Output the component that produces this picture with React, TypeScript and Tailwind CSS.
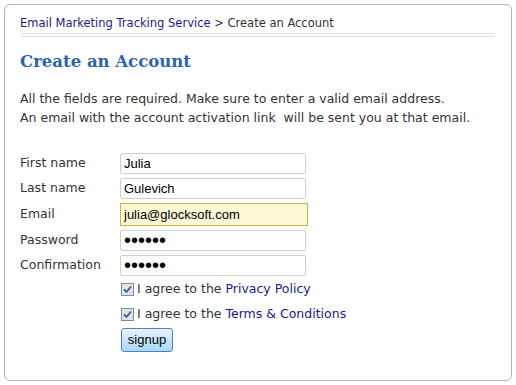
import React from "react";

const arial = { fontFamily: '"Liberation Sans", Arial, sans-serif' };

const Row = ({ label, children, tall }: { label: string; children: React.ReactNode; tall?: boolean }) => (
  <div className={tall ? "flex items-center h-[27px]" : "flex items-center h-[25px]"}>
    <div className="w-[100px] text-[12.5px] text-[#333]">{label}</div>
    {children}
  </div>
);

const TextBox = ({ value }: { value: string }) => (
  <input
    readOnly
    value={value}
    className="w-[186px] h-[21px] border border-[#cfcfcf] rounded-[2px] px-[3px] text-[13px] text-black outline-none"
    style={arial}
  />
);

const PassBox = () => (
  <div
    className="w-[186px] h-[21px] border border-[#cfcfcf] rounded-[2px] pl-[3px] flex items-center text-[20px] leading-[20px] text-black overflow-hidden"
    style={arial}
  >
    <span className="-mt-[1px]">••••••</span>
  </div>
);

const Check = () => (
  <span className="inline-flex w-[13px] h-[13px] border border-[#8a8a8a] bg-[#dde4f0] items-center justify-center mr-[3px] shrink-0">
    <svg width="9" height="9" viewBox="0 0 9 9">
      <path d="M1 4.5 L3.5 7 L8 1.5" stroke="#3b5a9a" strokeWidth="1.8" fill="none" />
    </svg>
  </span>
);

export default function App() {
  return (
    <div className="w-[516px] h-[385px] bg-white p-[4px]" style={{ fontFamily: '"DejaVu Sans", Verdana, sans-serif' }}>
      <div className="w-[508px] h-[377px] border border-[#b4b4b4] rounded-[6px] px-[15px] pt-[10px]">
        <div className="text-[11.5px] leading-[16px] pb-[2px]">
          <span className="text-[#1a1a8c]">Email Marketing Tracking Service</span>
          <span className="text-[#333]"> &gt; Create an Account</span>
        </div>
        <div className="w-[475px] h-[4px] border-t border-b border-[#e2e2e2]" />
        <h1
          className="text-[16.5px] font-bold text-[#2c63b0] mt-[14px] leading-[22px]"
          style={{ fontFamily: '"DejaVu Serif", Georgia, serif' }}
        >
          Create an Account
        </h1>
        <p className="text-[12.5px] text-[#333] leading-[19px] mt-[16px]">
          All the fields are required. Make sure to enter a valid email address.
          <br />
          An email with the account activation link&nbsp; will be sent you at that email.
        </p>
        <div className="mt-[24px]">
          <Row label="First name">
            <TextBox value="Julia" />
          </Row>
          <Row label="Last name">
            <TextBox value="Gulevich" />
          </Row>
          <Row label="Email" tall>
            <input
              readOnly
              value="julia@glocksoft.com"
              className="w-[188px] h-[23px] border border-[#c9b24a] bg-[#fff8d6] px-[3px] text-[13px] text-black outline-none"
              style={arial}
            />
          </Row>
          <Row label="Password">
            <PassBox />
          </Row>
          <Row label="Confirmation">
            <PassBox />
          </Row>
        </div>
        <div className="pl-[101px] -mt-[1px] text-[12.5px] text-[#333]">
          <div className="flex items-center h-[25px]">
            <Check />
            <span>
              I agree to the <span className="text-[#1a1a8c]">Privacy Policy</span>
            </span>
          </div>
          <div className="flex items-center h-[25px]">
            <Check />
            <span>
              I agree to the <span className="text-[#1a1a8c]">Terms &amp; Conditions</span>
            </span>
          </div>
          <button
            className="mt-[1px] w-[52px] h-[24px] border border-[#4f83b5] rounded-[3px] bg-gradient-to-b from-[#e6f4fd] to-[#a9d8f6] text-[13px] text-black"
            style={arial}
          >
            signup
          </button>
        </div>
      </div>
    </div>
  );
}
